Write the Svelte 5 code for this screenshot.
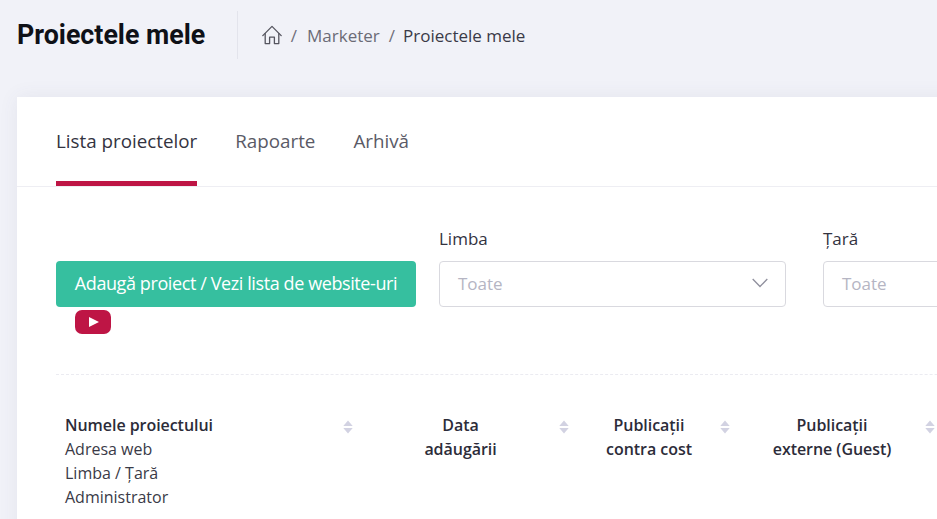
<script>
  const columns = [
    { lines: ['Data', 'adăugării'] },
    { lines: ['Publicații', 'contra cost'] },
    { lines: ['Publicații', 'externe (Guest)'] }
  ];
</script>

<div class="page">
  <header class="top">
    <h1>Proiectele mele</h1>
    <nav class="crumbs">
      <svg class="home" viewBox="0 0 20 20" width="20" height="20" fill="none" stroke="#55555f" stroke-width="1.3" stroke-linecap="round" stroke-linejoin="round" aria-hidden="true">
        <path d="M0.8 10.6 10 1.4l9.2 9.2" />
        <path d="M3.2 8.6V18.6h4.4v-6.4h4.8v6.4h4.4V8.6" />
      </svg>
      <span class="sep one">/</span>
      <span class="muted">Marketer</span>
      <span class="sep">/</span>
      <span class="current">Proiectele mele</span>
    </nav>
  </header>

  <main class="card">
    <div class="tabs">
      <span class="tab active">Lista proiectelor</span>
      <span class="tab">Rapoarte</span>
      <span class="tab">Arhivă</span>
    </div>

    <section class="filters">
      <div class="action">
        <button class="add">Adaugă proiect / Vezi lista de website-uri</button>
        <svg class="yt" viewBox="0 0 36 24" width="36" height="24" aria-hidden="true">
          <rect width="36" height="24" rx="7" fill="#be1545" />
          <path d="M14 7 24 12 14 17z" fill="#fff" />
        </svg>
      </div>
      <div class="field lang">
        <span class="label">Limba</span>
        <div class="select">
          <span>Toate</span>
          <svg viewBox="0 0 16 10" width="16" height="10" fill="none" stroke="#8f8f9d" stroke-width="1.3" aria-hidden="true">
            <path d="M0.7 1 8 8.5 15.3 1" />
          </svg>
        </div>
      </div>
      <div class="field country">
        <span class="label">Țară</span>
        <div class="select"><span>Toate</span></div>
      </div>
    </section>

    <div class="rule"></div>

    <div class="thead">
      <div class="th first">
        <div class="txt">
          <strong>Numele proiectului</strong>
          <span>Adresa web</span>
          <span>Limba / Țară</span>
          <span>Administrator</span>
        </div>
        <svg class="sort" viewBox="0 0 10 14" width="10" height="14" fill="#d2d2e2" aria-hidden="true">
          <path d="M5 .5 9.7 6H.3z" /><path d="M5 13.5.3 8h9.4z" />
        </svg>
      </div>
      {#each columns as col}
        <div class="th">
          <div class="txt center">
            {#each col.lines as line}<strong>{line}</strong>{/each}
          </div>
          <svg class="sort" viewBox="0 0 10 14" width="10" height="14" fill="#d2d2e2" aria-hidden="true">
            <path d="M5 .5 9.7 6H.3z" /><path d="M5 13.5.3 8h9.4z" />
          </svg>
        </div>
      {/each}
    </div>
  </main>
</div>

<style>
  :global(body) {
    margin: 0;
    background: #f1f2f8;
  }
  .page {
    width: 937px;
    height: 519px;
    overflow: hidden;
    font-family: "Open Sans", "Liberation Sans", sans-serif;
    color: #1e1e2d;
  }
  .top {
    display: flex;
    align-items: center;
    height: 70px;
    padding-left: 17px;
    margin-bottom: 27px;
  }
  h1 {
    margin: 0;
    padding-right: 31.5px;
    font-family: Roboto, "Liberation Sans", sans-serif;
    font-size: 26.8px;
    font-weight: 700;
    color: #0f1117;
    line-height: 48px;
    border-right: 1px solid #e3e4ec;
  }
  .crumbs {
    display: flex;
    align-items: center;
    margin-left: 24px;
    font-size: 17px;
    color: #33333f;
  }
  .sep {
    margin: 0 8px 0 9px;
    color: #6f6f7a;
  }
  .sep.one {
    margin: 0 10px 0 9px;
  }
  .muted {
    color: #6b6b76;
  }
  .current {
    color: #3a3a47;
  }
  .card {
    width: 1300px;
    height: 470px;
    margin-left: 17px;
    background: #fff;
    box-shadow: 0 0 18px rgba(80, 80, 120, 0.08);
  }
  .tabs {
    display: flex;
    gap: 38px;
    height: 90px;
    box-sizing: border-box;
    padding-left: 39px;
    border-bottom: 1px solid #eeeef3;
  }
  .tab {
    height: 89px;
    box-sizing: border-box;
    padding-top: 31px;
    font-size: 18.8px;
    line-height: 26px;
    color: #5a5a66;
  }
  .tab.active {
    color: #33333f;
    border-bottom: 5px solid #be1545;
  }
  .filters {
    display: flex;
    padding: 41px 0 0 39px;
  }
  .action {
    width: 360px;
    margin-right: 23px;
    padding-top: 33px;
  }
  .add {
    display: block;
    width: 100%;
    height: 46px;
    border: 0;
    border-radius: 4px;
    padding: 0 0 2px;
    background: #36bf9f;
    color: #fff;
    font: 400 18px "Open Sans", sans-serif;
    letter-spacing: -0.4px;
  }
  .yt {
    display: block;
    margin: 3px 0 0 19px;
  }
  .field {
    display: flex;
    flex-direction: column;
  }
  .lang {
    width: 347px;
    margin-right: 37px;
  }
  .country {
    width: 347px;
  }
  .label {
    height: 33px;
    font-size: 17px;
    line-height: 22px;
    color: #33333f;
  }
  .select {
    display: flex;
    align-items: center;
    justify-content: space-between;
    height: 46px;
    box-sizing: border-box;
    padding: 0 17px 2px 18px;
    border: 1px solid #d9d9df;
    border-radius: 4px;
    font-size: 17px;
    color: #b5b5c3;
  }
  .rule {
    margin: 40px 0 0 39px;
    border-top: 1px dashed #ebebf1;
  }
  .thead {
    display: grid;
    grid-template-columns: 304px 216px 161px 205px;
    margin: 30px 0 0 39px;
  }
  .th {
    display: flex;
    align-items: flex-start;
    gap: 7px;
    padding: 8px 7px 0 9px;
    font-size: 16px;
    line-height: 24px;
  }
  .txt {
    flex: 1;
    display: flex;
    flex-direction: column;
    min-width: 0;
  }
  .txt.center {
    text-align: center;
  }
  .first .txt span {
    color: #3a3a47;
  }
  strong {
    font-weight: 600;
    color: #2c2c39;
    letter-spacing: -0.05px;
  }
  .sort {
    flex: none;
    margin-top: 7px;
  }
</style>
